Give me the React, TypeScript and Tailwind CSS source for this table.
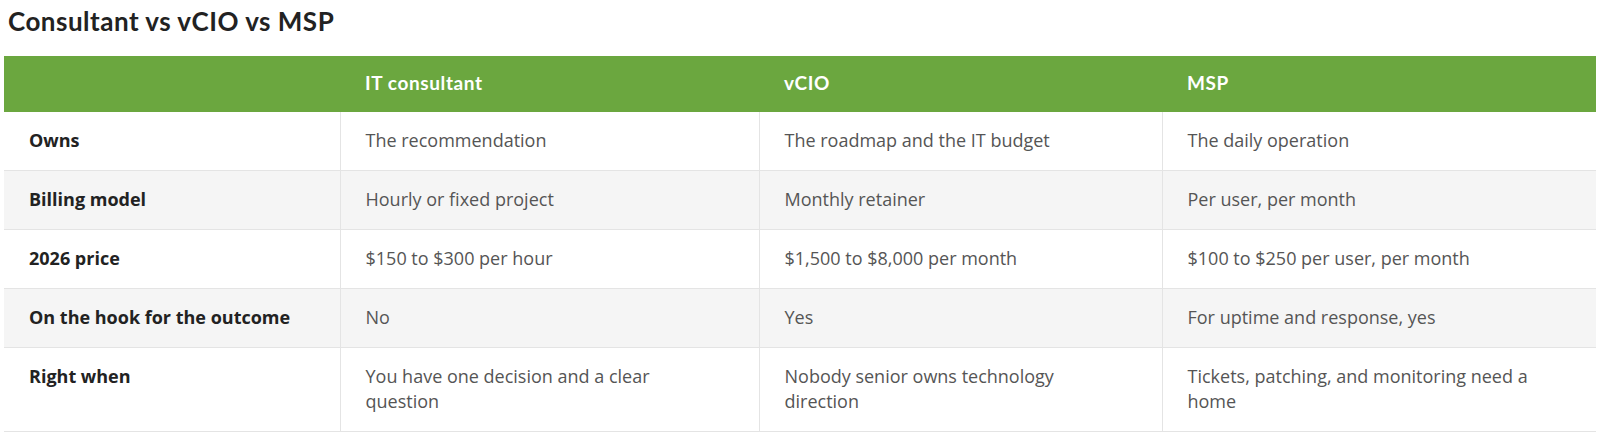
import React from "react";

const rows: [string, string, string, string][] = [
  ["Owns", "The recommendation", "The roadmap and the IT budget", "The daily operation"],
  ["Billing model", "Hourly or fixed project", "Monthly retainer", "Per user, per month"],
  ["2026 price", "$150 to $300 per hour", "$1,500 to $8,000 per month", "$100 to $250 per user, per month"],
  ["On the hook for the outcome", "No", "Yes", "For uptime and response, yes"],
  [
    "Right when",
    "You have one decision and a clear question",
    "Nobody senior owns technology direction",
    "Tickets, patching, and monitoring need a home",
  ],
];

export default function App() {
  return (
    <div className="w-[1600px] h-[436px] bg-white overflow-hidden px-[4px]">
      <h2
        className="text-[26px] font-bold text-[#222] leading-[32px] tracking-[0.5px] pt-[5px] pl-[4px] h-[56px]"
        style={{ fontFamily: "Lato, 'Open Sans', sans-serif" }}
      >
        Consultant vs vCIO vs MSP
      </h2>
      <table
        className="w-[1592px] table-fixed border-collapse text-[18px] leading-[25px]"
        style={{ fontFamily: "'Open Sans', sans-serif" }}
      >
        <colgroup>
          <col className="w-[336px]" />
          <col className="w-[419px]" />
          <col className="w-[403px]" />
          <col className="w-[434px]" />
        </colgroup>
        <thead>
          <tr className="bg-[#6ba73f] h-[56px]">
            <th className="px-[25px]"></th>
            {["IT consultant", "vCIO", "MSP"].map((h) => (
              <th
                key={h}
                className="pl-[25px] pr-[40px] text-left text-white font-bold text-[19px] tracking-[0.6px] align-middle pb-[3px]"
                style={{ fontFamily: "Lato, 'Open Sans', sans-serif" }}
              >
                {h}
              </th>
            ))}
          </tr>
        </thead>
        <tbody>
          {rows.map((r, i) => (
            <tr key={i} className={`${i % 2 === 1 ? "bg-[#f5f5f5]" : "bg-white"} border-b border-[#e4e4e4]`}>
              {r.map((c, j) => (
                <td
                  key={j}
                  className={`pl-[25px] pr-[40px] pt-[16px] pb-[17px] align-top ${
                    j === 0 ? "font-bold text-[#222]" : "text-[#555] border-l border-[#e4e4e4]"
                  }`}
                >
                  {c}
                </td>
              ))}
            </tr>
          ))}
        </tbody>
      </table>
    </div>
  );
}
